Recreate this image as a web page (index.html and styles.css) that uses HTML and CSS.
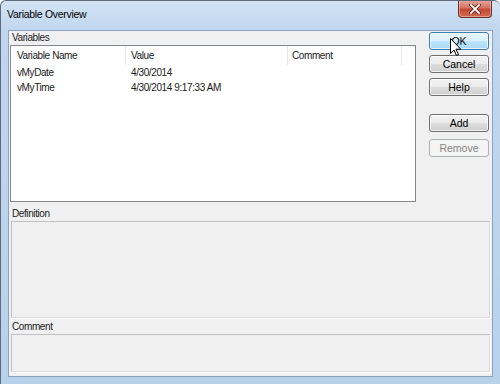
FILE: index.html
```html
<!DOCTYPE html>
<html>
<head>
    <meta charset="UTF-8">
    <title>Variable Overview</title>
    <link rel="stylesheet" href="styles.css">
</head>
<body>
    <div class="window">
        <div class="titlebar">
            <span class="title">Variable Overview</span>
            <div class="close-btn">
                <svg width="12" height="10" viewBox="0 0 12 10">
                    <path d="M2 1 L10 9 M10 1 L2 9" stroke="#5a1e16" stroke-width="3.4" stroke-linecap="square"/>
                    <path d="M2 1 L10 9 M10 1 L2 9" stroke="#ffffff" stroke-width="1.8" stroke-linecap="square"/>
                </svg>
            </div>
        </div>
        <div class="client">
            <div class="top-row">
                <div class="vars">
                    <div class="label">Variables</div>
                    <div class="listview">
                        <div class="lv-row lv-header">
                            <div class="col col-name">Variable Name</div>
                            <div class="col col-value">Value</div>
                            <div class="col col-comment">Comment</div>
                            <div class="col col-rest"></div>
                        </div>
                        <div class="lv-row">
                            <div class="col col-name">vMyDate</div>
                            <div class="col col-value">4/30/2014</div>
                            <div class="col col-comment"></div>
                        </div>
                        <div class="lv-row">
                            <div class="col col-name">vMyTime</div>
                            <div class="col col-value">4/30/2014 9:17:33 AM</div>
                            <div class="col col-comment"></div>
                        </div>
                    </div>
                </div>
                <div class="buttons">
                    <button class="btn btn-hot">OK</button>
                    <button class="btn">Cancel</button>
                    <button class="btn">Help</button>
                    <button class="btn btn-add">Add</button>
                    <button class="btn btn-remove" disabled>Remove</button>
                </div>
            </div>
            <div class="label label-def">Definition</div>
            <div class="box box-def"></div>
            <div class="label label-com">Comment</div>
            <div class="box box-com"></div>
        </div>
        <!-- mouse pointer hovering the OK button -->
        <svg class="pointer" width="12" height="19" viewBox="0 0 12 19">
            <path d="M0.5 0.5 L0.5 15.5 L4 12 L6.5 17.5 L8.5 16.5 L6 11.2 L10.8 11.2 Z" fill="#ffffff" stroke="#000000" stroke-width="1" stroke-linejoin="miter"/>
        </svg>
    </div>
</body>
</html>
```

FILE: styles.css
```css
/* Windows 7 style dialog */
body {
    margin: 0;
    font-family: "Liberation Sans", Arial, sans-serif;
    font-size: 10px;
    letter-spacing: -0.4px;
    color: #1a1a1a;
    background: #ffffff;
}

.window {
    position: relative;
    width: 500px;
    height: 384px;
    box-sizing: border-box;
    border: 1px solid #5d6b7c;
    border-bottom: none;
    border-right: none;
    border-radius: 6px 6px 0 0;
    background: linear-gradient(to bottom, #d2e3f4 0px, #c0d6ee 30px, #b9d1ea 100%);
    padding: 0 7px 7px 7px;
    display: flex;
    flex-direction: column;
    overflow: hidden;
}

.titlebar {
    height: 29px;
    display: flex;
    align-items: flex-start;
    justify-content: space-between;
}

.title {
    font-size: 10.5px;
    letter-spacing: -0.3px;
    margin-top: 7px;
    margin-left: -1px;
    color: #000;
}

.close-btn {
    width: 34px;
    height: 18px;
    margin-top: -1px;
    margin-right: 1px;
    box-sizing: border-box;
    border: 1px solid #6e2f27;
    border-top: none;
    border-radius: 0 0 4px 4px;
    background: linear-gradient(to bottom, #e6a99d 0%, #d47563 45%, #c24a35 55%, #d06b4f 100%);
    box-shadow: inset 0 0 0 1px rgba(255, 255, 255, 0.35);
    display: flex;
    align-items: center;
    justify-content: center;
}

.client {
    flex: 1;
    min-height: 0;
    background: #f0f0f0;
    border: 1px solid #8ba3bf;
    box-sizing: border-box;
    padding: 0 3px 0 1px;
    display: flex;
    flex-direction: column;
}

.top-row {
    display: flex;
}

.vars {
    width: 406px;
}

.label {
    height: 13px;
    line-height: 13px;
    padding-left: 2px;
}

.vars .label {
    margin-bottom: 1px;
}

.listview {
    height: 157px;
    box-sizing: border-box;
    border: 1px solid #828790;
    background: #ffffff;
    overflow: hidden;
}

.lv-row {
    display: flex;
    height: 15px;
    line-height: 15px;
}

.lv-header {
    height: 19px;
    line-height: 19px;
}

.col {
    box-sizing: border-box;
    padding-left: 6px;
    white-space: nowrap;
}

.col-name { width: 115px; }
.col-value { width: 162px; padding-left: 5px; }
.col-comment { width: 114px; padding-left: 4px; }
.col-rest { flex: 1; }

.lv-header .col {
    border-right: 1px solid #e3e5e8;
}

.lv-header .col-rest {
    border-right: none;
}

.buttons {
    display: flex;
    flex-direction: column;
    gap: 5px;
    margin-left: 13px;
    padding-top: 1px;
}

.btn {
    width: 60px;
    height: 18px;
    padding: 0;
    font-family: "Liberation Sans", Arial, sans-serif;
    font-size: 10.5px;
    letter-spacing: 0;
    color: #000;
    border: 1px solid #707070;
    border-radius: 3px;
    background: linear-gradient(to bottom, #f2f2f2 0%, #ebebeb 50%, #dddddd 51%, #cfcfcf 100%);
    box-shadow: inset 0 0 0 1px rgba(255, 255, 255, 0.7);
}

.btn-hot {
    border-color: #3c7fb1;
    background: linear-gradient(to bottom, #eaf6fd 0%, #d9f0fc 50%, #bee6fd 51%, #a7d9f5 100%);
}

.btn-add {
    margin-top: 13px;
}

.btn-remove {
    margin-top: 2px;
}

.btn:disabled {
    color: #838383;
    border-color: #adb2b5;
    background: #f4f4f4;
    box-shadow: none;
}

.label-def {
    margin-top: 5px;
    margin-bottom: 1px;
}

.label-com {
    margin-top: 2px;
    margin-bottom: 1px;
}

.box {
    width: 479px;
    box-sizing: border-box;
    margin-left: 1px;
    border: 1px solid #c0c0c0;
    border-right-color: #dcdcdc;
    border-bottom-color: #dcdcdc;
    background: #f0f0f0;
    box-shadow: 1px 1px 0 #ffffff;
}

.box-def {
    height: 97px;
}

.box-com {
    height: 38px;
}

.pointer {
    position: absolute;
    left: 449px;
    top: 37px;
}
```
